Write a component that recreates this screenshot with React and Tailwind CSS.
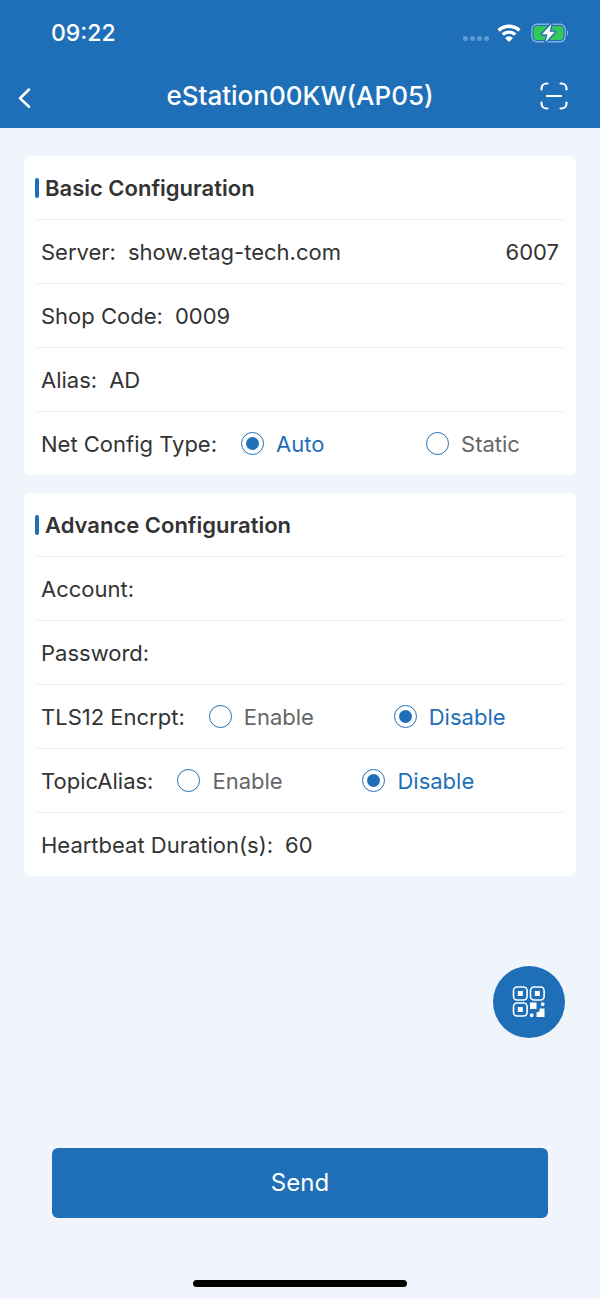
import { useState } from 'react';

const BASIC_FIELDS = [
    { key: 'shopCode', label: 'Shop Code:' },
    { key: 'alias',    label: 'Alias:'     },
];

const ENABLE_OPTIONS = ['Enable', 'Disable'];

function WifiIcon() {
    return (
        <svg viewBox="0 0 24 18" className="h-[18px] w-6" fill="none" stroke="currentColor" strokeWidth="3.4" aria-hidden="true">
            <path d="M1.6 6.4a15 15 0 0 1 20.8 0" />
            <path d="M5.7 10.6a9.2 9.2 0 0 1 12.6 0" />
            <path d="M12 18 8 14a5.600 5.600 0 0 1 8 0z" fill="currentColor" stroke="none" />
        </svg>
    );
}

function BatteryIcon() {
    return (
        <svg viewBox="0 0 38 20" className="h-5 w-[38px]" aria-hidden="true">
            <rect x="0.75" y="1.25" width="33.5" height="17.5" rx="5" fill="none" stroke="#87b2da" strokeWidth="1.3" />
            <rect x="2.5" y="3" width="30" height="14" rx="3.5" fill="#34c759" />
            <path d="M36 7.2c1.6.8 1.6 4.8 0 5.6z" fill="#87b2da" />
            <path d="M20.4 1 11 11.2h5.4L14.6 19 24 8.8h-5.4z" fill="#fff" stroke="#1f6fb8" strokeWidth="2.6" paintOrder="stroke" strokeLinejoin="round" />
        </svg>
    );
}

function ScanIcon() {
    return (
        <svg viewBox="0 0 28 28" className="size-7" fill="none" stroke="currentColor" strokeWidth="2.2" strokeLinecap="round" aria-hidden="true">
            <path d="M1.5 7.500V6.500a5 5 0 0 1 5-5h1" />
            <path d="M20.500 1.500h1a5 5 0 0 1 5 5v1" />
            <path d="M26.500 20.500v1a5 5 0 0 1-5 5h-1" />
            <path d="M7.500 26.500h-1a5 5 0 0 1-5-5v-1" />
            <path d="M7 14h14" />
        </svg>
    );
}

function QrIcon() {
    return (
        <svg viewBox="0 0 34 32" className="h-8 w-[34px]" fill="currentColor" aria-hidden="true">
            <g fill="none" stroke="currentColor" strokeWidth="1.6">
                <rect x="1.5" y="1" width="13.600" height="13" rx="3.500" />
                <rect x="18.500" y="1" width="13.600" height="13" rx="3.500" />
                <rect x="1.5" y="17" width="13.600" height="13" rx="3.500" />
            </g>
            <rect x="5.800" y="5" width="5" height="5" />
            <rect x="22.800" y="5" width="5" height="5" />
            <rect x="5.800" y="21" width="5" height="5" />
            <rect x="18" y="16.500" width="6.500" height="6.500" />
            <rect x="29" y="16.500" width="3.500" height="3.500" rx="1.200" />
            <rect x="18" y="27.500" width="3.500" height="3.500" rx="1.200" />
            <path d="M27.500 22.500h5V31h-8v-4.500l3-1z" />
        </svg>
    );
}

function Card({ title, children }) {
    return (
        <section className="rounded-md bg-white px-3">
            <div className="flex h-16 items-center gap-1.5 border-b border-[#f0f0f2]">
                <span className="-ml-px h-5 w-1 rounded-sm bg-[#1f6fb8]" />
                <h2 className="font-semibold">{title}</h2>
            </div>
            <div className="divide-y divide-[#f0f0f2]">{children}</div>
        </section>
    );
}

function Field({ id, label, value, onChange, type = 'text', children }) {
    return (
        <div className="flex h-16 items-center gap-3 px-[5px] last:h-[63px]">
            <label htmlFor={id} className="shrink-0">{label}</label>
            <input
                id={id}
                type={type}
                value={value}
                onChange={(e) => onChange(e.target.value)}
                className="min-w-0 flex-1 bg-transparent outline-none"
            />
            {children}
        </div>
    );
}

function RadioField({ name, label, options, value, onChange }) {
    return (
        <fieldset className="flex h-16 items-center gap-6 px-[5px] last:h-[63px]" aria-label={label}>
            <span className="shrink-0">{label}</span>
            <div className="flex">
                {options.map((option) => (
                    <label
                        key={option}
                        className={`flex w-[185px] items-center gap-3 ${option === value ? 'text-[#1f6fb8]' : 'text-[#666666]'}`}
                    >
                        <input
                            type="radio"
                            name={name}
                            checked={option === value}
                            onChange={() => onChange(option)}
                            className="grid size-[23px] shrink-0 appearance-none place-items-center rounded-full border border-[#1f6fb8] before:size-[13px] before:rounded-full checked:before:bg-[#1f6fb8]"
                        />
                        {option}
                    </label>
                ))}
            </div>
        </fieldset>
    );
}

export default function App() {
    const [config, setConfig] = useState({
        server   : 'show.etag-tech.com',
        port     : '6007',
        shopCode : '0009',
        alias    : 'AD',
        netType  : 'Auto',
        account  : '',
        password : '',
        tls      : 'Disable',
        topic    : 'Disable',
        heartbeat: '60',
    });

    const update = (key) => (value) => setConfig((prev) => ({ ...prev, [key]: value }));

    return (
        <div className="flex min-h-screen flex-col bg-[#f0f5fc] font-['Inter',sans-serif] text-[22px] leading-8 text-[#333333]">
            <header className="bg-[#1f6fb8] text-white">
                <div className="flex h-16 items-center justify-between pt-0.5 pr-[31px] pl-[51px]">
                    <span className="text-[23px] font-medium">09:22</span>
                    <div className="flex items-center">
                        <div className="mt-2.5 mr-2 flex gap-0.5">
                            {[0, 1, 2, 3].map((dot) => (
                                <span key={dot} className="size-[5px] rounded-full bg-[#5f9bd2]" />
                            ))}
                        </div>
                        <WifiIcon />
                        <span className="ml-2.5"><BatteryIcon /></span>
                    </div>
                </div>
                <div className="grid h-16 grid-cols-[1fr_auto_1fr] items-center">
                    <button type="button" aria-label="Back" className="ml-[18px] justify-self-start pt-1">
                        <svg viewBox="0 0 14 20" className="h-5 w-3.5" fill="none" stroke="currentColor" strokeWidth="2.5" strokeLinecap="round" strokeLinejoin="round" aria-hidden="true">
                            <path d="M11 1.500 2 10.250l9 8.500" />
                        </svg>
                    </button>
                    <h1 className="text-[26px] font-medium">eStation00KW(AP05)</h1>
                    <button type="button" aria-label="Scan" className="mr-8 justify-self-end">
                        <ScanIcon />
                    </button>
                </div>
            </header>

            <main className="flex flex-col gap-[18px] px-6 pt-7">
                <Card title="Basic Configuration">
                    <Field id="server" label="Server:" value={config.server} onChange={update('server')}>
                        <input
                            aria-label="Port"
                            value={config.port}
                            onChange={(e) => update('port')(e.target.value)}
                            className="w-20 bg-transparent text-right outline-none"
                        />
                    </Field>
                    {BASIC_FIELDS.map(({ key, label }) => (
                        <Field key={key} id={key} label={label} value={config[key]} onChange={update(key)} />
                    ))}
                    <RadioField name="netType" label="Net Config Type:" options={['Auto', 'Static']} value={config.netType} onChange={update('netType')} />
                </Card>

                <Card title="Advance Configuration">
                    <Field id="account" label="Account:" value={config.account} onChange={update('account')} />
                    <Field id="password" label="Password:" type="password" value={config.password} onChange={update('password')} />
                    <RadioField name="tls" label="TLS12 Encrpt:" options={ENABLE_OPTIONS} value={config.tls} onChange={update('tls')} />
                    <RadioField name="topic" label="TopicAlias:" options={ENABLE_OPTIONS} value={config.topic} onChange={update('topic')} />
                    <Field id="heartbeat" label="Heartbeat Duration(s):" value={config.heartbeat} onChange={update('heartbeat')} />
                </Card>
            </main>

            <footer className="mt-auto flex flex-col pb-3">
                <button type="button" aria-label="Show QR code" className="mr-[35px] grid size-[72px] place-items-center self-end rounded-full bg-[#1f6fb8] text-white">
                    <QrIcon />
                </button>
                <button type="button" className="mx-[52px] mt-[110px] h-[70px] rounded-md bg-[#1f6fb8] text-2xl text-white">
                    Send
                </button>
                <div className="mt-[62px] h-[7px] w-[214px] self-center rounded-full bg-black" />
            </footer>
        </div>
    );
}
